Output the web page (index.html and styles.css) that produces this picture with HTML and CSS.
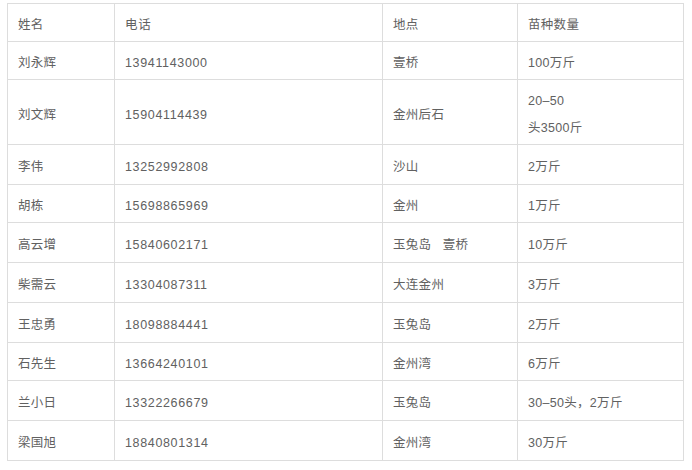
FILE: index.html
```html
<!DOCTYPE html>
<html lang="zh">
<head>
<meta charset="utf-8">
<link rel="stylesheet" href="styles.css">
</head>
<body>
<table class="list">
  <colgroup>
    <col class="c-name">
    <col class="c-phone">
    <col class="c-place">
    <col class="c-amount">
  </colgroup>
  <tr class="r38"><td>姓名</td><td class="tel">电话</td><td>地点</td><td>苗种数量</td></tr>
  <tr class="r38"><td>刘永辉</td><td class="tel">13941143000</td><td>壹桥</td><td>100万斤</td></tr>
  <tr class="r65"><td>刘文辉</td><td class="tel">15904114439</td><td>金州后石</td><td>20–50<br>头3500斤</td></tr>
  <tr class="r40"><td>李伟</td><td class="tel">13252992808</td><td>沙山</td><td>2万斤</td></tr>
  <tr class="r38"><td>胡栋</td><td class="tel">15698865969</td><td>金州</td><td>1万斤</td></tr>
  <tr class="r40"><td>高云增</td><td class="tel">15840602171</td><td>玉兔岛&nbsp;&nbsp;&nbsp;壹桥</td><td>10万斤</td></tr>
  <tr class="r40"><td>柴需云</td><td class="tel">13304087311</td><td>大连金州</td><td>3万斤</td></tr>
  <tr class="r40"><td>王忠勇</td><td class="tel">18098884441</td><td>玉兔岛</td><td>2万斤</td></tr>
  <tr class="r38"><td>石先生</td><td class="tel">13664240101</td><td>金州湾</td><td>6万斤</td></tr>
  <tr class="r40"><td>兰小日</td><td class="tel">13322266679</td><td>玉兔岛</td><td>30–50头，2万斤</td></tr>
  <tr class="r40"><td>梁国旭</td><td class="tel">18840801314</td><td>金州湾</td><td>30万斤</td></tr>
</table>
</body>
</html>
```
FILE: styles.css
```css
html, body {
  margin: 0;
  padding: 0;
  background: #fff;
}
body {
  padding: 3px 0 0 7px;
  font-family: "Liberation Sans", "Noto Sans CJK SC", sans-serif;
  font-size: 12.5px;
  letter-spacing: 0.3px;
  color: #616161;
}
.list {
  border-collapse: collapse;
  table-layout: fixed;
  width: 677px;
}
.c-name { width: 107px; }
.c-phone { width: 268px; }
.c-place { width: 135px; }
.c-amount { width: 166px; }
.list td {
  border: 1px solid #dddddd;
  padding: 6px 10px 0 10px;
  line-height: 27px;
  vertical-align: middle;
  white-space: nowrap;
}
.list td.tel {
  letter-spacing: 0.65px;
}
.r38 { height: 38px; }
.r40 { height: 40px; }
.r65 { height: 65px; }
```
